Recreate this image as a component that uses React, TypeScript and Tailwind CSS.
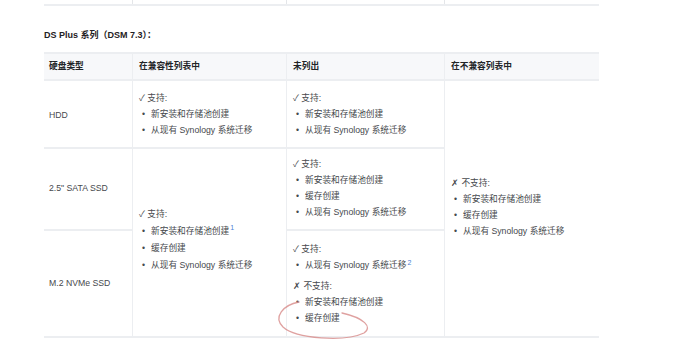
import React from "react";

type Group = { ok: boolean; items: { text: string; sup?: string }[] };

const font = {
  fontFamily: '"Liberation Sans", "Noto Sans CJK SC", sans-serif',
};

function Groups({ groups, tall }: { groups: Group[]; tall?: boolean }) {
  const line = tall ? "h-[17px] leading-[17px]" : "h-[16px] leading-[16px]";
  return (
    <div className="flex flex-col gap-[5px]">
      {groups.map((g, i) => (
        <div key={i} className="flex flex-col">
          <div className={line}>{g.ok ? "✓ 支持:" : "✗ 不支持:"}</div>
          {g.items.map((it, j) => (
            <div key={j} className={`flex items-center pl-[3px] ${line}`}>
              <span className="w-[9px] shrink-0">•</span>
              <span>
                {it.text}
                {it.sup && (
                  <sup className="text-[7px] text-[#4a7fd6] ml-[1px]">{it.sup}</sup>
                )}
              </span>
            </div>
          ))}
        </div>
      ))}
    </div>
  );
}

export default function App() {
  const cell = "border-b-2 border-r border-[#eceef1] px-[6px] flex flex-col justify-center";
  return (
    <div
      className="relative w-[690px] h-[357px] bg-white overflow-hidden text-[8.7px] text-[#46494d]"
      style={font}
    >
      <div className="pl-[44px]">
        {/* bottom of previous table */}
        <div className="flex w-[555px] h-[6px] border-b-2 border-[#eceef1]">
          <div className="w-[89px] border-r border-[#e4e6e9]" />
          <div className="w-[154px] border-r border-[#e4e6e9]" />
          <div className="w-[158px] border-r border-[#e4e6e9]" />
          <div className="w-[154px]" />
        </div>

        <div className="mt-[21px] h-[16px] leading-[16px] text-[9px] font-semibold text-[#1f2124]">
          DS Plus 系列（DSM 7.3）：
        </div>

        <div className="mt-[9px] grid w-[555px] grid-cols-[89px_154px_158px_154px] grid-rows-[29px_68px_82px_107px]">
          {/* header */}
          <div className={`${cell} border-t-2 bg-[#f7f8fa] font-semibold text-[#222427] pl-[5px]`}>硬盘类型</div>
          <div className={`${cell} border-t-2 bg-[#f7f8fa] font-semibold text-[#222427]`}>在兼容性列表中</div>
          <div className={`${cell} border-t-2 bg-[#f7f8fa] font-semibold text-[#222427]`}>未列出</div>
          <div className={`${cell} border-t-2 border-r-0 bg-[#f7f8fa] font-semibold text-[#222427]`}>在不兼容列表中</div>

          {/* HDD */}
          <div className={`${cell} pl-[5px] pt-[3px]`}>HDD</div>
          <div className={cell}>
            <Groups groups={[{ ok: true, items: [{ text: "新安装和存储池创建" }, { text: "从现有 Synology 系统迁移" }] }]} />
          </div>
          <div className={cell}>
            <Groups groups={[{ ok: true, items: [{ text: "新安装和存储池创建" }, { text: "从现有 Synology 系统迁移" }] }]} />
          </div>
          <div className={`${cell} border-r-0 row-span-3 pb-[4px]`}>
            <Groups
              groups={[
                {
                  ok: false,
                  items: [
                    { text: "新安装和存储池创建" },
                    { text: "缓存创建" },
                    { text: "从现有 Synology 系统迁移" },
                  ],
                },
              ]}
            />
          </div>

          {/* 2.5" SATA SSD */}
          <div className={`${cell} pl-[5px] col-start-1 row-start-3`}>2.5" SATA SSD</div>
          <div className={`${cell} col-start-2 row-start-3 row-span-2 pb-[6px]`}>
            <Groups
              tall
              groups={[
                {
                  ok: true,
                  items: [
                    { text: "新安装和存储池创建", sup: "1" },
                    { text: "缓存创建" },
                    { text: "从现有 Synology 系统迁移" },
                  ],
                },
              ]}
            />
          </div>
          <div className={`${cell} col-start-3 row-start-3 pb-[3px]`}>
            <Groups
              groups={[
                {
                  ok: true,
                  items: [
                    { text: "新安装和存储池创建" },
                    { text: "缓存创建" },
                    { text: "从现有 Synology 系统迁移" },
                  ],
                },
              ]}
            />
          </div>

          {/* M.2 NVMe SSD */}
          <div className={`${cell} pl-[5px] col-start-1 row-start-4`}>M.2 NVMe SSD</div>
          <div className={`${cell} col-start-3 row-start-4`}>
            <Groups
              groups={[
                { ok: true, items: [{ text: "从现有 Synology 系统迁移", sup: "2" }] },
                { ok: false, items: [{ text: "新安装和存储池创建" }, { text: "缓存创建" }] },
              ]}
            />
          </div>
        </div>
      </div>

      {/* hand-drawn annotation */}
      <svg className="absolute left-0 top-0 pointer-events-none" width="690" height="357">
        <path
          d="M 299 302 C 283 305, 273 317, 283 327 C 296 339, 345 342, 364 333 C 373 327, 364 318, 342 313"
          fill="none"
          stroke="#d9908f"
          strokeWidth="1.3"
          strokeLinecap="round"
          opacity="0.85"
        />
      </svg>
    </div>
  );
}
